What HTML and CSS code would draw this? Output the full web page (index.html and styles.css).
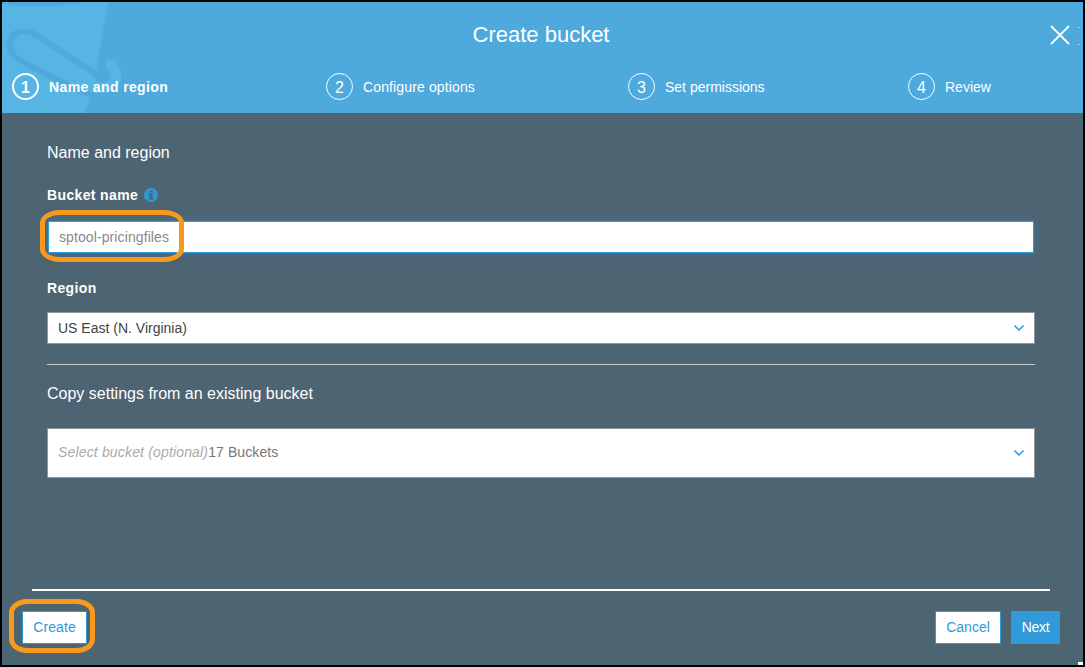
FILE: index.html
```html
<!DOCTYPE html>
<html lang="en">
<head>
<meta charset="utf-8">
<title>Create bucket</title>
<link rel="stylesheet" href="styles.css">
</head>
<body>
<div class="dialog">
  <header class="header">
    <svg class="bucket-art" width="125" height="111" viewBox="2 2 125 111" aria-hidden="true">
      <path class="art-light" d="M2 2H108L96 72V80L90 98Q88 107 83 113H2Z"/>
      <path class="art-hook" d="M111 64.500Q118 72 115 81Q109 91 93 87L78 81"/>
      <path class="art-dark" d="M2 2H86Q40 10 2 4Z"/>
      <path class="art-line" d="M95 73L34 34Q23 28 13 35Q6 45 14 56Q18 60 40 71L74 88Q82 92 91 95"/>
      <path class="art-line" d="M93 72Q101 81 107 75"/>
    </svg>
    <h1 class="title">Create bucket</h1>
    <button class="close" aria-label="Close">
      <svg width="24" height="20" viewBox="0 0 24 20"><path d="M1 1L19 19M19 1L1 19"/><path class="tick" d="M28 2.500h1M28 19.500h1"/></svg>
    </button>
    <ol class="steps">
      <li class="step active"><span class="num">1</span><span class="step-label">Name and region</span></li>
      <li class="step"><span class="num">2</span><span class="step-label t-configure">Configure options</span></li>
      <li class="step"><span class="num">3</span><span class="step-label">Set permissions</span></li>
      <li class="step"><span class="num">4</span><span class="step-label">Review</span></li>
    </ol>
  </header>
  <main class="content">
    <h2 class="section-title">Name and region</h2>
    <div class="label name-label"><span>Bucket name</span>
      <svg class="info" width="14" height="14" viewBox="0 0 14 14"><circle cx="7" cy="7" r="7"/><path d="M5.500 2.500h3v2h-3zM5 5.500h3.500v4.500h1v1.500H4.500V10h1V7H4.500V5.500z"/></svg>
    </div>
    <div class="name-input"><span class="t-value">sptool-pricingfiles</span><span class="callout callout-name"></span></div>
    <div class="label region-label">Region</div>
    <div class="select region-select"><span>US East (N. Virginia)</span>
      <svg class="chevron" width="10" height="6" viewBox="0 0 10 6"><path d="M.5.5L5 5L9.500.5"/></svg>
    </div>
    <h2 class="copy-title">Copy settings from an existing bucket</h2>
    <div class="select bucket-select"><span class="bucket-text"><em>Select bucket (optional)</em><span>17 Buckets</span></span>
      <svg class="chevron" width="10" height="6" viewBox="0 0 10 6"><path d="M.5.5L5 5L9.500.5"/></svg>
    </div>
  </main>
  <footer class="footer">
    <button class="btn create">Create<span class="callout callout-create"></span></button>
    <button class="btn cancel">Cancel</button>
    <button class="btn next">Next</button>
  </footer>
  <span class="corner"></span>
</div>
</body>
</html>
```
FILE: styles.css
```css
* { box-sizing: border-box; }
body {
  margin: 0;
  background: #000;
  font: 14px/20px "Liberation Sans", Arial, sans-serif;
  color: #fff;
}
.dialog {
  position: relative;
  display: flex;
  flex-direction: column;
  height: 667px;
  border: 2px solid #000;
  background: #4d6472;
  overflow: hidden;
}
.header {
  position: relative;
  flex: none;
  height: 111px;
  background: #4ea9dd;
}
.bucket-art { position: absolute; left: 0; top: 0; }
.art-light { fill: #57b5e4; }
.art-hook { fill: none; stroke: #57b5e4; stroke-width: 11; stroke-linecap: round; stroke-linejoin: round; }
.art-dark { fill: #4ea9dd; }
.art-line { fill: none; stroke: #4ea9dd; stroke-width: 6; stroke-linejoin: round; stroke-linecap: round; }
.title {
  position: relative;
  margin: 0;
  padding-top: 18px;
  padding-right: 3px;
  font-size: 22px;
  line-height: 30px;
  font-weight: 400;
  text-align: center;
}
.close {
  position: absolute;
  top: 23px;
  right: 9px;
  padding: 0;
  border: 0;
  background: none;
}
.close svg { display: block; overflow: visible; fill: none; stroke: #fff; stroke-width: 1.8; }
.close .tick { stroke-width: 1; }
.steps {
  position: relative;
  display: grid;
  grid-template-columns: 314px 302px 280px auto;
  margin: 0;
  padding: 23px 0 0 10px;
  list-style: none;
}
.step { display: flex; align-items: center; gap: 10px; height: 27px; }
.num {
  width: 27px;
  height: 27px;
  border: 1px solid #fff;
  border-radius: 50%;
  font-size: 16px;
  line-height: 27px;
  text-align: center;
}
.active { font-weight: 700; }
.active .num { border-width: 2px; line-height: 25px; }
.active .step-label { letter-spacing: .37px; }
.t-configure { letter-spacing: .13px; }
.step-label { padding-top: 1px; }
.content { flex: 1; padding: 30px 48px 0 45px; }
.section-title, .copy-title { margin: 0; font-size: 16px; line-height: 20px; font-weight: 400; }
.label { display: flex; align-items: center; font-weight: 700; letter-spacing: .36px; }
.name-label { gap: 6px; margin-top: 22px; }
.info { fill: #2f99d8; }
.info path { fill: #4d6472; }
.name-input {
  position: relative;
  display: flex;
  align-items: center;
  height: 32px;
  margin: 16px 1px 0;
  padding-left: 10px;
  border: 1px solid #2d9bdc;
  background: #fff;
  color: #888;
  box-shadow: 0 0 8px rgba(50, 145, 215, .5);
}
.t-value { letter-spacing: .1px; }
.callout { position: absolute; border: 5px solid #f8981d; pointer-events: none; }
.callout-name { left: -9px; top: -12px; width: 144px; height: 52px; border-radius: 20px / 13px; }
.region-label { margin-top: 25px; }
.select {
  display: flex;
  align-items: center;
  justify-content: space-between;
  padding: 0 10px;
  border: 1px solid #929899;
  background: #fff;
}
.region-select { height: 32px; margin-top: 14px; color: #444; }
.chevron { fill: none; stroke: #3ba3df; stroke-width: 1.6; }
.copy-title { margin-top: 20px; padding-top: 19px; border-top: 1px solid #c6cacb; }
.bucket-select { height: 50px; margin-top: 24px; color: #777; }
.bucket-text { margin-top: -2px; letter-spacing: .1px; }
.bucket-text em { color: #aaa; letter-spacing: .16px; }
.footer {
  display: flex;
  gap: 10px;
  flex: none;
  height: 76px;
  margin: 0 33px 0 30px;
  padding-top: 20px;
  border-top: 2px solid #fff;
}
.btn {
  position: relative;
  height: 33px;
  padding: 0 0 2px;
  border: 1px solid #2f99d8;
  background: #fff;
  color: #2f99d8;
  font: inherit;
}
.create { width: 65px; margin-left: -10px; margin-right: auto; letter-spacing: .1px; }
.cancel { width: 66px; }
.next { width: 49px; margin-right: -10px; background: #329ad8; color: #fff; letter-spacing: -.3px; }
.callout-create { left: -14px; top: -13px; width: 86px; height: 54px; border-radius: 18px / 14px; }
.corner { position: absolute; right: 0; bottom: 0; width: 5px; height: 3px; background: #fff; }
```
